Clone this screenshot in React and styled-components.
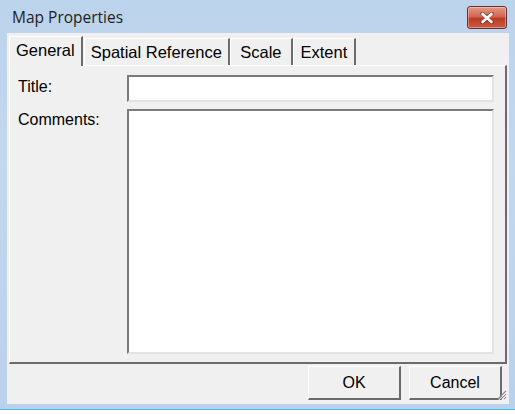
import React from "react";
import styled, { createGlobalStyle } from "styled-components";

const Global = createGlobalStyle`
  html, body { margin: 0; padding: 0; background: #ffffff; }
  body { font-family: "Liberation Sans", Arial, sans-serif; }
`;

const Window = styled.div`
  width: 515px;
  height: 410px;
  box-sizing: border-box;
  background: linear-gradient(180deg, #bcd3ec 0%, #c2d8ef 40%, #b9d1ea 100%);
  display: flex;
  flex-direction: column;
  padding: 0 6px 8px 7px;
  border-bottom: 1px solid #43c2e6;
  box-shadow: 0 2px 0 #2b2b2b;
`;

const TitleBar = styled.div`
  height: 33px;
  display: flex;
  align-items: center;
  justify-content: space-between;
  padding: 0 2px 0 5px;
  flex: none;
`;

const Caption = styled.span`
  font-family: "Open Sans", "Noto Sans", sans-serif;
  font-size: 15.5px;
  color: #1e1e1e;
  margin-top: 1px;
`;

const CloseButton = styled.div`
  width: 38px;
  height: 21px;
  margin-top: 2px;
  border: 1px solid #6d2d2a;
  border-radius: 3px;
  background: linear-gradient(180deg, #e39a89 0%, #d16652 45%, #bb3c26 55%, #cc5a43 100%);
  display: flex;
  align-items: center;
  justify-content: center;
  box-shadow: inset 0 0 0 1px rgba(255, 255, 255, 0.35);
`;

const Client = styled.div`
  flex: 1;
  background: #f0f0f0;
  display: flex;
  flex-direction: column;
  padding: 2px 2px 4px 2px;
`;

const TabStrip = styled.div`
  display: flex;
  align-items: flex-end;
  height: 30px;
  position: relative;
  z-index: 1;
`;

const Tab = styled.div`
  box-sizing: border-box;
  height: ${(p) => (p.$active ? 30 : 27)}px;
  min-width: ${(p) => (p.$active ? 0 : 63)}px;
  padding: 0 6px ${(p) => (p.$active ? 3 : 0)}px;
  margin: 0 ${(p) => (p.$active ? 1 : 0)}px ${(p) => (p.$active ? -1 : 0)}px 0;
  border-top: 1px solid #ffffff;
  border-left: 1px solid #ffffff;
  border-right: 2px solid #6b6b6b;
  background: #f0f0f0;
  font-size: 16.5px;
  color: #000;
  display: flex;
  align-items: center;
  justify-content: center;
`;

const Panel = styled.div`
  flex: none;
  height: 299px;
  box-sizing: border-box;
  border-top: 1px solid #ffffff;
  border-left: 1px solid #ffffff;
  border-right: 2px solid #6b6b6b;
  border-bottom: 2px solid #6b6b6b;
  padding: 9px 11px 8px 8px;
  display: grid;
  grid-template-columns: 109px 1fr;
  grid-template-rows: 27px 1fr;
  row-gap: 7px;
`;

const Label = styled.div`
  font-size: 16px;
  color: #000;
  padding-top: ${(p) => p.$top}px;
`;

const Field = styled.div`
  background: #ffffff;
  border-top: 2px solid #7a7a7a;
  border-left: 2px solid #7a7a7a;
  border-right: 2px solid #e3e3e3;
  border-bottom: 2px solid #e3e3e3;
`;

const Footer = styled.div`
  flex: 1;
  display: flex;
  justify-content: flex-end;
  align-items: flex-start;
  gap: 8px;
  padding: 2px 5px 0 0;
  position: relative;
`;

const Button = styled.div`
  width: 93px;
  height: 34px;
  box-sizing: border-box;
  border-top: 1px solid #ffffff;
  border-left: 1px solid #ffffff;
  border-right: 2px solid #6b6b6b;
  border-bottom: 2px solid #6b6b6b;
  background: #f0f0f0;
  display: flex;
  align-items: center;
  justify-content: center;
  font-size: 16px;
  color: #000;
`;

const Grip = styled.svg`
  position: absolute;
  right: 0;
  bottom: 0;
`;

export default function App() {
  return (
    <>
      <Global />
      <Window>
        <TitleBar>
          <Caption>Map Properties</Caption>
          <CloseButton>
            <svg width="16" height="12" viewBox="0 0 16 12">
              <path
                d="M3 1.5 L8 5 L13 1.5 M3 10.5 L8 7 L13 10.5"
                stroke="#4a1a14"
                strokeWidth="3.6"
                fill="none"
                strokeLinecap="round"
                opacity="0.5"
              />
              <path
                d="M3.5 2 L12.5 10 M12.5 2 L3.5 10"
                stroke="#ffffff"
                strokeWidth="2.6"
                fill="none"
                strokeLinecap="round"
              />
            </svg>
          </CloseButton>
        </TitleBar>
        <Client>
          <TabStrip>
            <Tab $active>General</Tab>
            <Tab>Spatial Reference</Tab>
            <Tab>Scale</Tab>
            <Tab>Extent</Tab>
          </TabStrip>
          <Panel>
            <Label $top={3}>Title:</Label>
            <Field />
            <Label $top={2}>Comments:</Label>
            <Field />
          </Panel>
          <Footer>
            <Button>OK</Button>
            <Button>Cancel</Button>
            <Grip width="12" height="12" viewBox="0 0 12 12">
              <path d="M11 3 L3 11 M11 6 L6 11 M11 9 L9 11" stroke="#8a8a8a" strokeWidth="1.2" />
              <path d="M12 3.8 L3.8 12 M12 6.8 L6.8 12 M12 9.8 L9.8 12" stroke="#ffffff" strokeWidth="1" />
            </Grip>
          </Footer>
        </Client>
      </Window>
    </>
  );
}
